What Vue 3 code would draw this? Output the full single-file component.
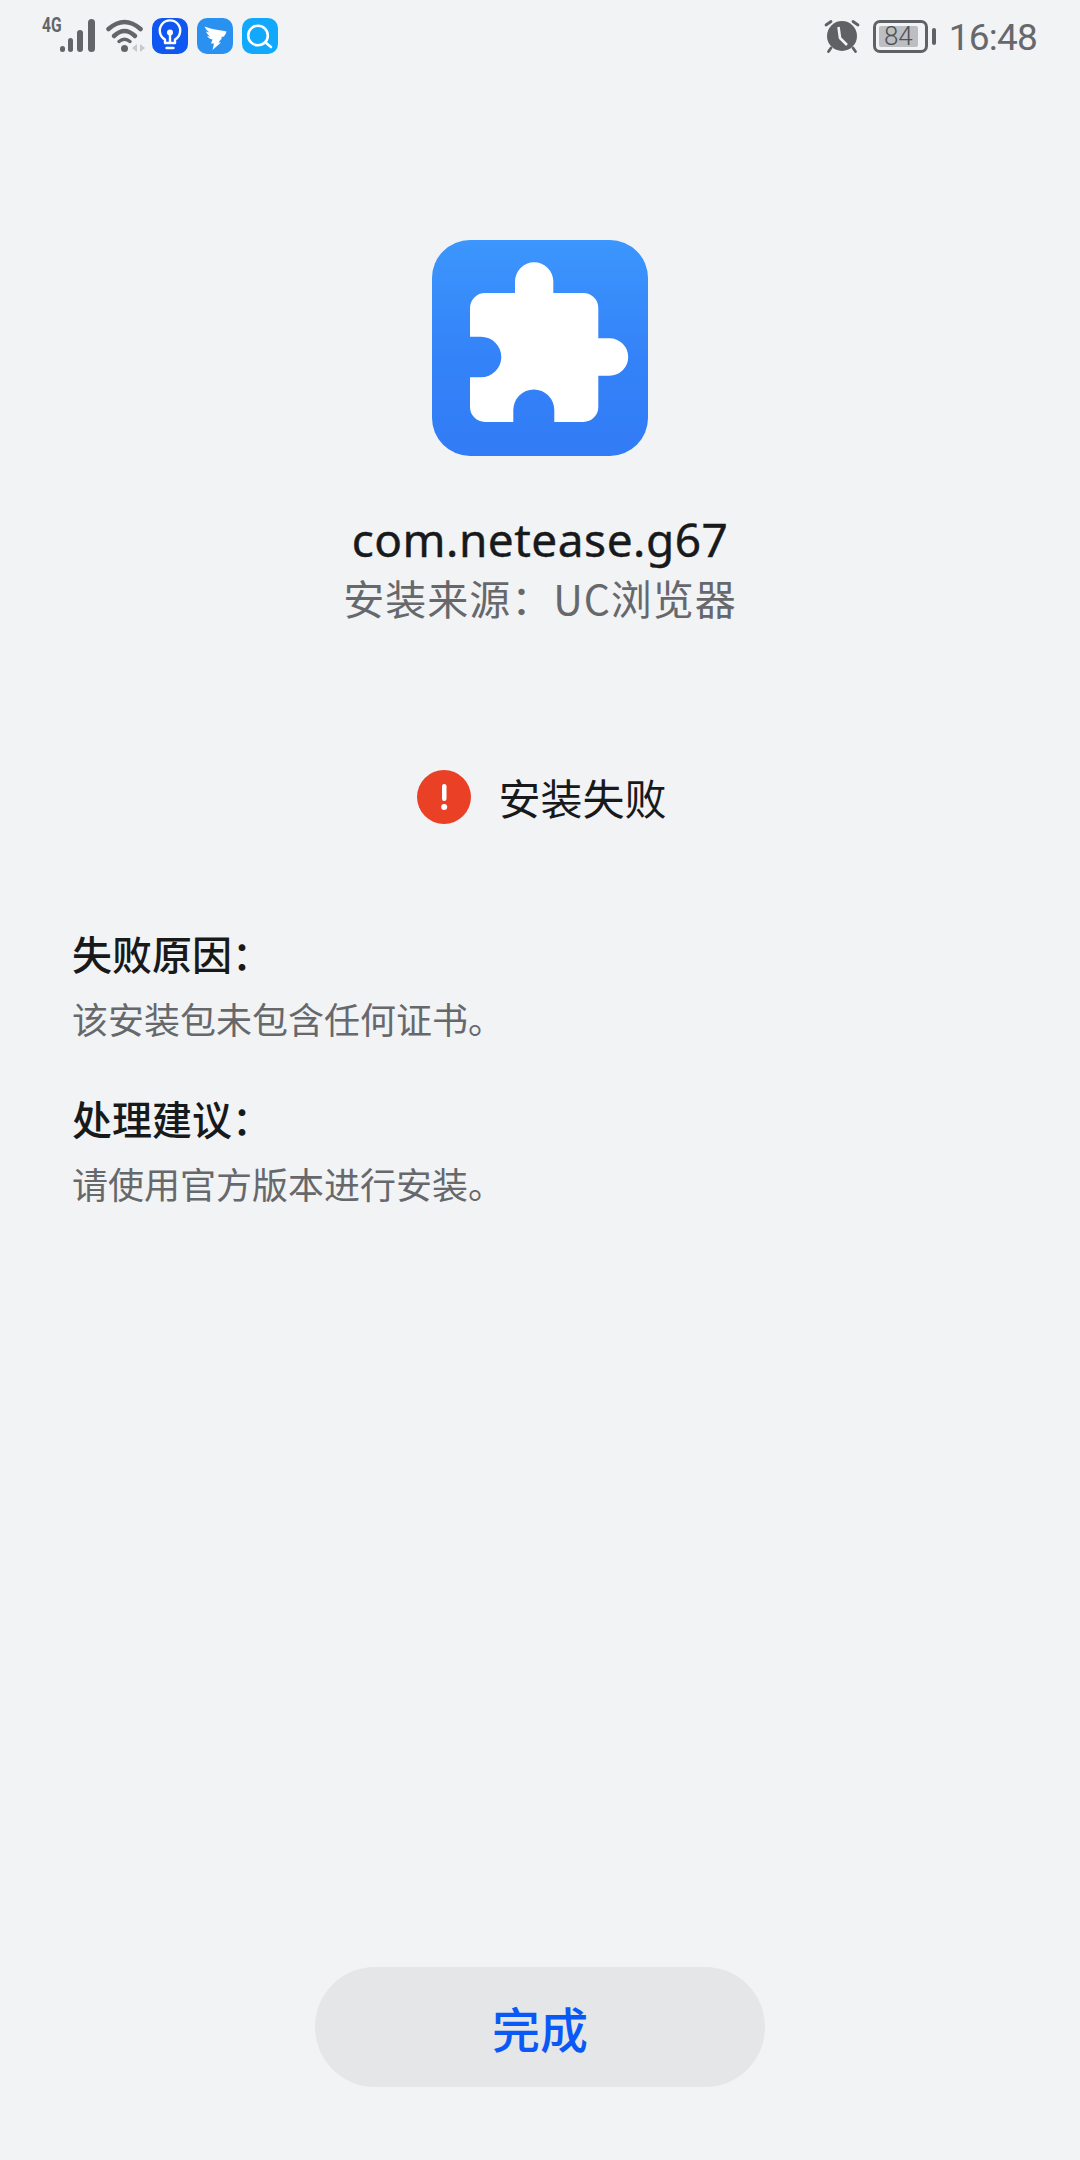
<template>
  <div class="page">
    <div class="status">
      <div class="status-left">
        <div class="net">
          <span class="net-label">4G</span>
          <svg class="signal" width="36" height="34" viewBox="0 0 36 34"><g fill="#636569"><rect x="0" y="27" width="5" height="6" rx="2.500"/><rect x="8" y="19" width="5" height="14" rx="2.500"/><rect x="17" y="11" width="6" height="22" rx="3"/><rect x="28" y="0" width="7" height="33" rx="3.500"/></g></svg>
        </div>
        <svg class="wifi" width="41" height="34" viewBox="0 0 41 34">
          <g fill="none" stroke="#636569" stroke-width="4.500" stroke-linecap="round">
            <path d="M2.500 10 Q18.500 -4 34.500 10"/>
            <path d="M8 17 Q18.500 7 29 17"/>
          </g>
          <path d="M13 22.500 Q18.500 18 24 22.500" fill="none" stroke="#636569" stroke-width="3.500" stroke-linecap="round"/>
          <circle cx="18.500" cy="29.500" r="3.500" fill="#636569"/>
          <path d="M31 25l-5 4 5 4zM34 25l5 4-5 4z" fill="#c6c8cb"/>
        </svg>
        <div class="app-ic ic-bulb">
          <svg width="36" height="36" viewBox="0 0 36 36" fill="none" stroke="#fff" stroke-width="2.400" stroke-linecap="round" stroke-linejoin="round">
            <path d="M13 25v-3.500A10.200 10.200 0 1 1 23 21.500V25z"/>
            <path d="M18 24.500v-9"/>
            <path d="M14.500 30h7"/>
            <circle cx="18" cy="14.500" r="1.800" fill="#fff"/>
          </svg>
        </div>
        <div class="app-ic ic-ding">
          <svg width="36" height="36" viewBox="0 0 36 36" fill="#fff">
            <path d="M7.500 8.500c6 2.500 12 3 22 5-.5 2-1.500 3.500-2.500 5l-3 .5 1 1-3.500 4.500h2.500L15.500 32l1.500-6.500h-3l1.500-4c-2.500-.5-4.500-2-5.500-3.500l3 .5c-2-1.500-3.500-3.500-4-5l3.500 1C10.500 13 8.500 11 7.500 8.500z"/>
          </svg>
        </div>
        <div class="app-ic ic-search">
          <svg width="36" height="36" viewBox="0 0 36 36" fill="none" stroke="#fff" stroke-width="2.600" stroke-linecap="round">
            <circle cx="16" cy="17.500" r="9.800"/>
            <path d="M23.500 24.500l5.500 4.500"/>
          </svg>
        </div>
      </div>
      <div class="status-right">
        <svg class="alarm" width="36" height="36" viewBox="0 0 36 36">
          <circle cx="18" cy="18" r="15" fill="#5f6165"/>
          <path d="M2 7l5-3.500M34 7l-5-3.500M7 30l-2.500 3.500M29 30l2.500 3.500" stroke="#5f6165" stroke-width="2.800" stroke-linecap="round"/>
          <path d="M14.500 9l1.500 11 7 7" fill="none" stroke="#f1f3f5" stroke-width="2.600" stroke-linejoin="round"/>
        </svg>
        <div class="battery">
          <div class="battery-body">
            <div class="battery-fill"><span>84</span></div>
          </div>
          <div class="battery-tip"></div>
        </div>
        <span class="time">16:48</span>
      </div>
    </div>

    <div class="app-icon">
      <svg width="216" height="216" viewBox="0 0 216 216">
        <defs>
          <linearGradient id="iconBg" x1="0" y1="0" x2="0" y2="1">
            <stop offset="0" stop-color="#3c96fd"/>
            <stop offset="0.55" stop-color="#3482f8"/>
            <stop offset="1" stop-color="#327cf6"/>
          </linearGradient>
        </defs>
        <rect width="216" height="216" rx="38" fill="url(#iconBg)"/>
        <path fill="#fff" d="M38 68a15 15 0 0 1 15-15H83V41.500a19.150 19.150 0 0 1 38.300 0V53H151a15 15 0 0 1 15.300 15V98.300H177.500a18.700 18.700 0 0 1 0 37.400H166.300V167a15 15 0 0 1-15 15H122.300V170a20.500 20.500 0 0 0-41 0V182H53a15 15 0 0 1-15-15V137.300H49a20.300 20.300 0 0 0 0-40.600H38z"/>
      </svg>
    </div>
    <div class="pkg">com.netease.g67</div>
    <div class="source">安装来源：UC浏览器</div>

    <div class="result">
      <svg width="54" height="54" viewBox="0 0 54 54">
        <circle cx="27" cy="27" r="27" fill="#ea4026"/>
        <rect x="25" y="14" width="4.500" height="17" rx="2.200" fill="#fff"/>
        <circle cx="27.200" cy="37" r="3" fill="#fff"/>
      </svg>
      <span>安装失败</span>
    </div>

    <div class="info">
      <div v-for="item in items" :key="item.title" class="info-block">
        <div class="info-title">{{ item.title }}</div>
        <div class="info-text">{{ item.text }}</div>
      </div>
    </div>

    <div class="grow"></div>
    <div class="done">完成</div>
  </div>
</template>

<script setup>
const items = [
  { title: "失败原因：", text: "该安装包未包含任何证书。" },
  { title: "处理建议：", text: "请使用官方版本进行安装。" },
];
</script>

<style>
html,
body {
  background: #f1f3f5;
}
</style>

<style scoped>
.page {
  width: 1080px;
  height: 2160px;
  background: #f1f3f5;
  display: flex;
  flex-direction: column;
  align-items: center;
  font-family: "Noto Sans CJK SC", "Noto Sans", sans-serif;
  color: #18191b;
  overflow: hidden;
}
.status {
  width: 100%;
  box-sizing: border-box;
  height: 72px;
  padding: 0 43px 0 42px;
  display: flex;
  justify-content: space-between;
  align-items: center;
}
.status-left,
.status-right {
  display: flex;
  align-items: center;
}
.net {
  display: flex;
  align-items: flex-start;
  height: 36px;
}
.net-label {
  font-family: "Roboto", sans-serif;
  font-weight: 700;
  font-size: 20px;
  line-height: 15px;
  color: #636569;
  width: 18px;
  transform: scaleX(0.78);
  transform-origin: left;
}
.signal {
  margin-top: 1px;
}
.wifi {
  margin-left: 10px;
}
.app-ic {
  width: 36px;
  height: 36px;
  border-radius: 10px;
  margin-left: 9px;
  display: flex;
}
.wifi + .app-ic {
  margin-left: 5px;
}
.ic-bulb {
  background: #0f57f0;
}
.ic-ding {
  background: #2b91f0;
}
.ic-search {
  background: #12a8fb;
}
.alarm {
  margin-right: 13px;
}
.battery {
  display: flex;
  align-items: center;
  margin-right: 13px;
}
.battery-body {
  width: 55px;
  height: 33px;
  box-sizing: border-box;
  border: 3px solid #5f6165;
  border-radius: 7px;
  padding: 3px;
}
.battery-fill {
  width: 39px;
  height: 21px;
  background: #bcbec1;
  border-radius: 2px;
  display: flex;
  align-items: center;
  justify-content: center;
}
.battery-fill span {
  font-family: "Roboto", sans-serif;
  font-size: 26px;
  font-weight: 300;
  line-height: 21px;
  color: #4f5155;
}
.battery-tip {
  width: 4px;
  height: 17px;
  background: #5f6165;
  border-radius: 2px;
  margin-left: 4px;
}
.time {
  font-family: "Roboto", sans-serif;
  font-size: 37px;
  font-weight: 400;
  line-height: 40px;
  margin-top: 4px;
  color: #66686c;
  letter-spacing: -0.800px;
}
.app-icon {
  margin-top: 168px;
  height: 216px;
}
.pkg {
  margin-top: 53px;
  font-family: "Noto Sans", sans-serif;
  font-size: 46px;
  line-height: 60px;
  font-weight: 400;
  color: #18191b;
  letter-spacing: 0.500px;
  -webkit-text-stroke: 0.400px #18191b;
}
.source {
  font-size: 41px;
  line-height: 56px;
  color: #66686c;
  letter-spacing: 1px;
}
.result {
  margin-top: 142px;
  margin-left: 4px;
  display: flex;
  align-items: center;
  font-size: 42px;
  line-height: 60px;
  color: #18191b;
}
.result svg {
  margin-right: 27px;
}
.info {
  align-self: stretch;
  padding: 0 72px;
  margin-top: 99px;
}
.info-block {
  margin-bottom: 48px;
}
.info-title {
  font-size: 40px;
  line-height: 54px;
  font-weight: 500;
  color: #18191b;
}
.info-text {
  font-size: 36px;
  line-height: 50px;
  margin-top: 13px;
  color: #66686c;
}
.grow {
  flex: 1;
}
.done {
  width: 450px;
  height: 120px;
  margin-bottom: 73px;
  border-radius: 60px;
  background: #e5e6e8;
  color: #0a59f7;
  font-size: 48px;
  font-weight: 500;
  display: flex;
  align-items: center;
  justify-content: center;
}
</style>
